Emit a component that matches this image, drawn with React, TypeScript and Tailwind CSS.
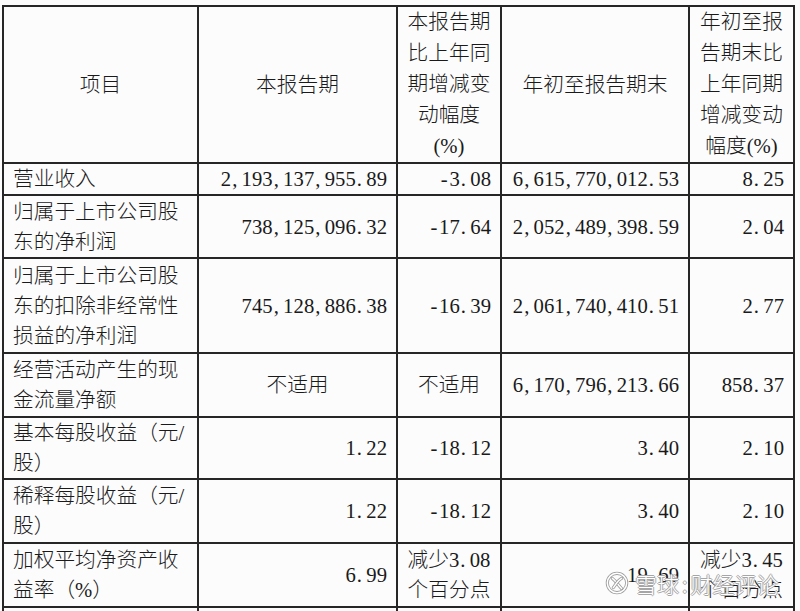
import React from "react";

type Cell = { lines: string[]; align: "left" | "center" | "right" };

interface Row {
  h: string;
  item: string[];
  cur: Cell;
  curPct: Cell;
  ytd: Cell;
  ytdPct: Cell;
}

const r = (v: string): Cell => ({ lines: [v], align: "right" });
const c = (...lines: string[]): Cell => ({ lines, align: "center" });

const rows: Row[] = [
  { h: "h-[32px]", item: ["营业收入"], cur: r("2,193,137,955.89"), curPct: r("-3.08"), ytd: r("6,615,770,012.53"), ytdPct: r("8.25") },
  { h: "h-[63px]", item: ["归属于上市公司股", "东的净利润"], cur: r("738,125,096.32"), curPct: r("-17.64"), ytd: r("2,052,489,398.59"), ytdPct: r("2.04") },
  { h: "h-[95px]", item: ["归属于上市公司股", "东的扣除非经常性", "损益的净利润"], cur: r("745,128,886.38"), curPct: r("-16.39"), ytd: r("2,061,740,410.51"), ytdPct: r("2.77") },
  { h: "h-[64px]", item: ["经营活动产生的现", "金流量净额"], cur: c("不适用"), curPct: c("不适用"), ytd: r("6,170,796,213.66"), ytdPct: r("858.37") },
  { h: "h-[62px]", item: ["基本每股收益（元/", "股）"], cur: r("1.22"), curPct: r("-18.12"), ytd: r("3.40"), ytdPct: r("2.10") },
  { h: "h-[64px]", item: ["稀释每股收益（元/", "股）"], cur: r("1.22"), curPct: r("-18.12"), ytd: r("3.40"), ytdPct: r("2.10") },
  { h: "h-[64px]", item: ["加权平均净资产收", "益率（%）"], cur: r("6.99"), curPct: c("减少3.08", "个百分点"), ytd: r("19.69"), ytdPct: c("减少3.45", "个百分点") },
];

const border = "border-2 border-[#262626]";

// SimSun style half-width digits: every ascii char gets the same cell
function Text({ v }: { v: string }) {
  const parts: React.ReactNode[] = [];
  v.split("").forEach((ch, i) => {
    if (/[0-9.,\-]/.test(ch)) {
      parts.push(
        <span
          key={i}
          className={
            ch === "," || ch === "."
              ? "inline-block w-[10.4px] text-left pl-[1px]"
              : "inline-block w-[10.4px] text-center"
          }
        >
          {ch}
        </span>
      );
    } else {
      parts.push(<span key={i}>{ch}</span>);
    }
  });
  return <>{parts}</>;
}

function Td({ cell }: { cell: Cell }) {
  const cls = cell.align === "right" ? "text-right pr-[9px]" : "text-center";
  return (
    <td className={`${border} align-middle ${cls}`}>
      {cell.lines.map((l, i) => (
        <div key={i} className="whitespace-nowrap">
          <Text v={l} />
        </div>
      ))}
    </td>
  );
}

function Logo() {
  return (
    <svg width="24" height="24" viewBox="0 0 26 26" fill="none" className="block shrink-0">
      <circle cx="13" cy="13" r="10.5" stroke="#9c9c9c" strokeWidth="3.4" />
      <circle cx="13" cy="13" r="10.5" stroke="#ffffff" strokeWidth="1.6" />
      <path d="M8 8 C 12 11, 14 15, 18 19" stroke="#9c9c9c" strokeWidth="3.4" strokeLinecap="round" />
      <path d="M8 8 C 12 11, 14 15, 18 19" stroke="#ffffff" strokeWidth="1.6" strokeLinecap="round" />
      <path d="M18 8 C 14 10, 12 14, 9 18" stroke="#9c9c9c" strokeWidth="3.4" strokeLinecap="round" />
      <path d="M18 8 C 14 10, 12 14, 9 18" stroke="#ffffff" strokeWidth="1.6" strokeLinecap="round" />
    </svg>
  );
}

export default function App() {
  return (
    <div className="relative w-[800px] h-[611px] overflow-hidden bg-[#fcfcfd] text-[#1a1a1a] font-['Liberation_Serif','Noto_Sans_CJK_SC',serif] font-light text-[20.7px] leading-[30px]">
      <div className="pt-[5px] pl-[2px]">
        <table className="table-fixed border-collapse w-[793px]">
          <colgroup>
            <col className="w-[195px]" />
            <col className="w-[199px]" />
            <col className="w-[104px]" />
            <col className="w-[188px]" />
            <col className="w-[105px]" />
          </colgroup>
          <tbody>
            <tr className="h-[157px]">
              <td className={`${border} text-center`}>项目</td>
              <td className={`${border} text-center`}>本报告期</td>
              <td className={`${border} text-center leading-[31px]`}>
                <div>本报告期</div>
                <div>比上年同</div>
                <div>期增减变</div>
                <div>动幅度</div>
                <div>(%)</div>
              </td>
              <td className={`${border} text-center`}>年初至报告期末</td>
              <td className={`${border} text-center leading-[31px]`}>
                <div>年初至报</div>
                <div>告期末比</div>
                <div>上年同期</div>
                <div>增减变动</div>
                <div>幅度(%)</div>
              </td>
            </tr>
            {rows.map((row, i) => (
              <tr key={i} className={row.h}>
                <td className={`${border} pl-[9px] align-middle`}>
                  {row.item.map((l, j) => (
                    <div key={j} className="whitespace-nowrap">{l}</div>
                  ))}
                </td>
                <Td cell={row.cur} />
                <Td cell={row.curPct} />
                <Td cell={row.ytd} />
                <Td cell={row.ytdPct} />
              </tr>
            ))}
            <tr className="h-[40px]">
              <td className={border} />
              <td className={border} />
              <td className={border} />
              <td className={border} />
              <td className={border} />
            </tr>
          </tbody>
        </table>
      </div>

      {/* 雪球 watermark */}
      <div className="absolute left-[605px] top-[569px] h-[28px] flex items-center gap-[6px] whitespace-nowrap">
        <Logo />
        <span className="font-['Noto_Sans_CJK_SC',sans-serif] text-[22px] leading-[28px] text-white [text-shadow:1px_0_0_#a6a6a6,-1px_0_0_#a6a6a6,0_1px_0_#a6a6a6,0_-1px_0_#a6a6a6]">
          雪球<span className="px-[3px]">:</span>财经评论
        </span>
      </div>
    </div>
  );
}
